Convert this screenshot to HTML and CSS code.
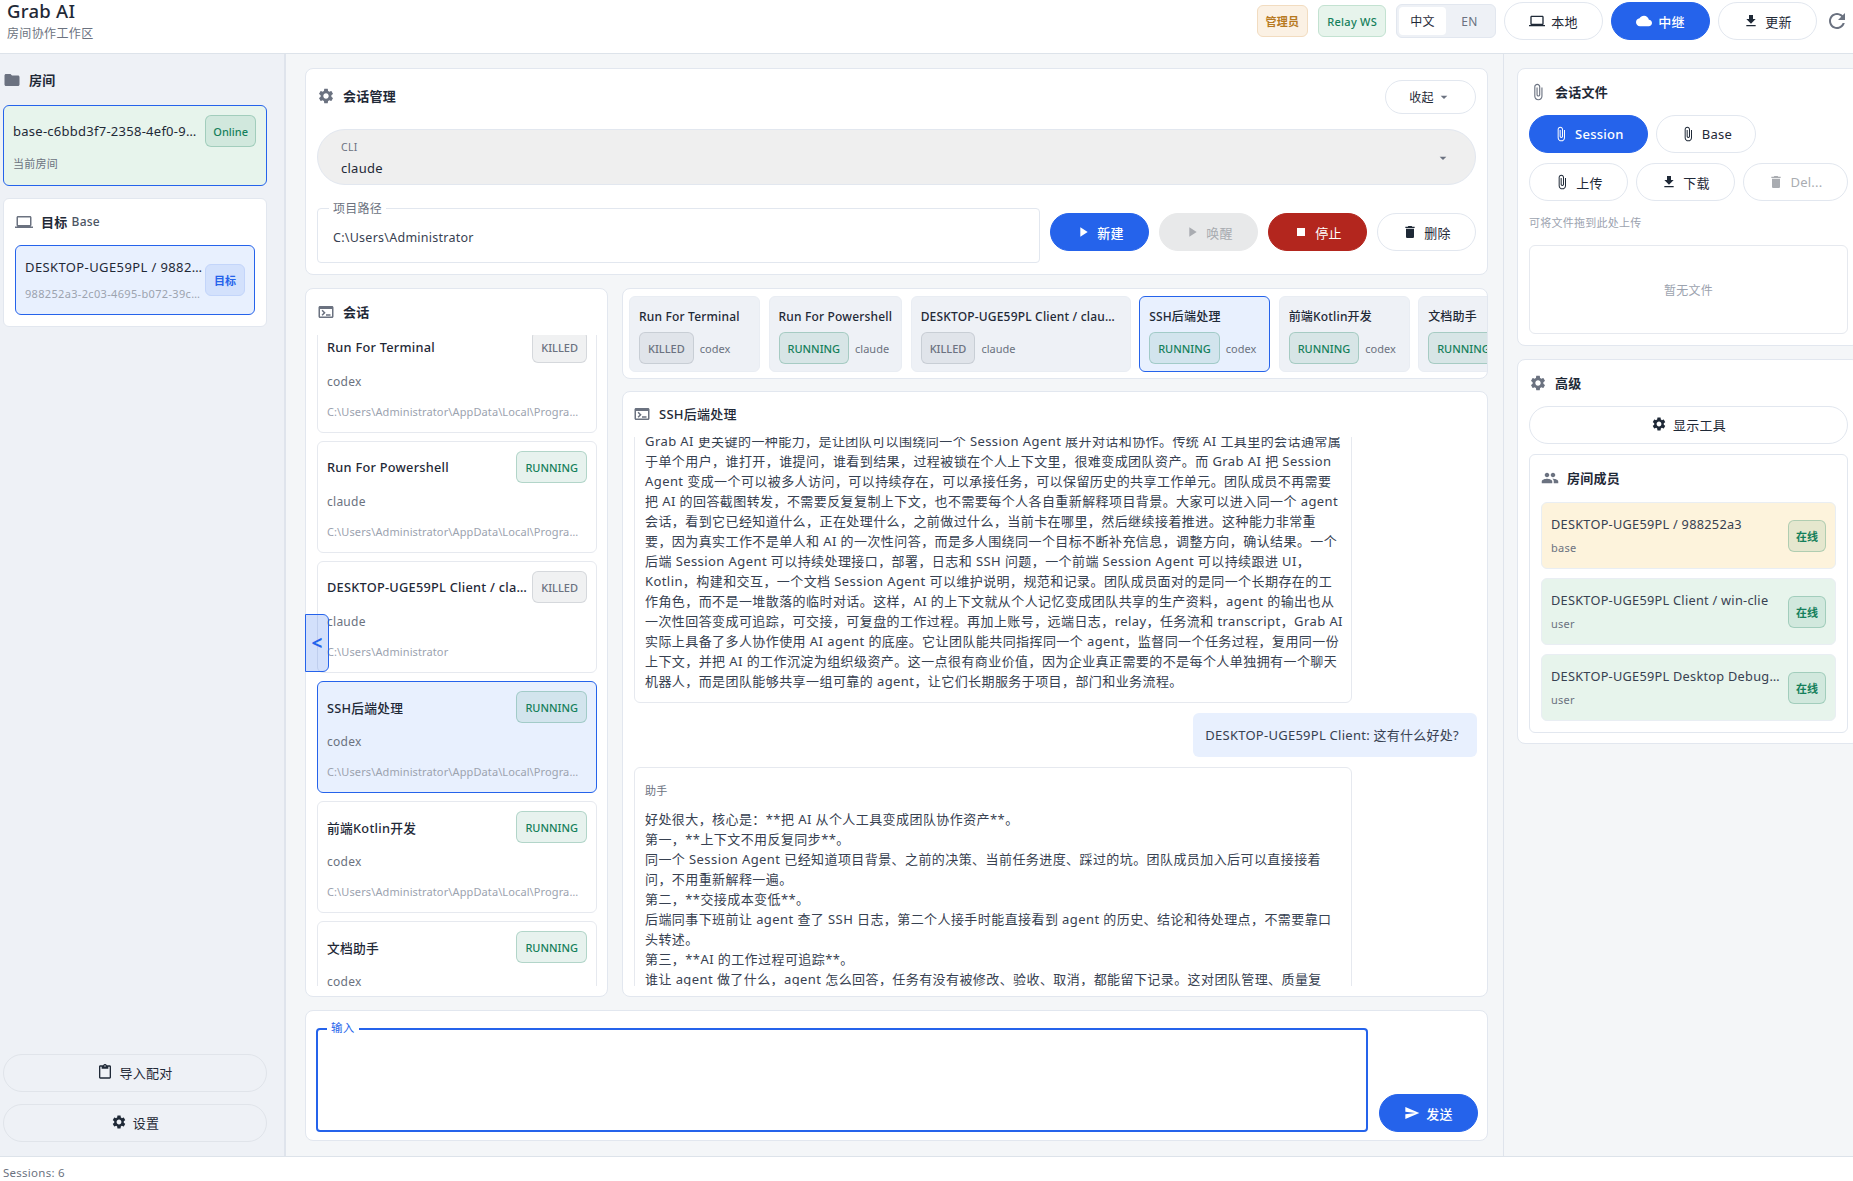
FILE: index.html
```html
<!DOCTYPE html>
<html lang="zh-CN">
<head>
  <meta charset="UTF-8">
  <title>Grab AI</title>
  <link rel="stylesheet" href="styles.css">
</head>
<body>
  <svg class="defs" width="0" height="0">
    <symbol id="i-settings" viewBox="0 0 24 24"><path d="M19.14 12.94c.04-.3.06-.61.06-.94 0-.32-.02-.64-.07-.94l2.03-1.58c.18-.14.23-.41.12-.61l-1.92-3.32c-.12-.22-.37-.29-.59-.22l-2.39.96c-.5-.38-1.03-.7-1.62-.94l-.36-2.54c-.04-.24-.24-.41-.48-.41h-3.84c-.24 0-.43.17-.47.41l-.36 2.54c-.59.24-1.13.57-1.62.94l-2.39-.96c-.22-.08-.47 0-.59.22L2.74 8.87c-.12.21-.08.47.12.61l2.03 1.58c-.05.3-.09.63-.09.94s.02.64.07.94l-2.03 1.58c-.18.14-.23.41-.12.61l1.92 3.32c.12.22.37.29.59.22l2.39-.96c.5.38 1.03.7 1.62.94l.36 2.54c.05.24.24.41.48.41h3.84c.24 0 .44-.17.47-.41l.36-2.54c.59-.24 1.13-.56 1.62-.94l2.39.96c.22.08.47 0 .59-.22l1.92-3.32c.12-.22.07-.47-.12-.61l-2.01-1.58zM12 15.6c-1.98 0-3.6-1.62-3.6-3.6s1.62-3.6 3.6-3.6 3.6 1.62 3.6 3.6-1.62 3.6-3.6 3.6z"/></symbol>
    <symbol id="i-folder" viewBox="0 0 24 24"><path d="M10 4H4c-1.1 0-1.99.9-1.99 2L2 18c0 1.1.9 2 2 2h16c1.1 0 2-.9 2-2V8c0-1.1-.9-2-2-2h-8l-2-2z"/></symbol>
    <symbol id="i-laptop" viewBox="0 0 24 24"><path d="M20 18c1.1 0 1.99-.9 1.99-2L22 6c0-1.1-.9-2-2-2H4c-1.1 0-2 .9-2 2v10c0 1.1.9 2 2 2H0v2h24v-2h-4zM4 6h16v10H4V6z"/></symbol>
    <symbol id="i-terminal" viewBox="0 0 24 24"><path d="M20 4H4c-1.11 0-2 .9-2 2v12c0 1.1.89 2 2 2h16c1.1 0 2-.9 2-2V6c0-1.1-.9-2-2-2zm0 14H4V8h16v10zm-2-1h-6v-2h6v2zM7.5 17l-1.41-1.41L8.67 13l-2.59-2.59L7.5 9l4 4-4 4z"/></symbol>
    <symbol id="i-attach" viewBox="0 0 24 24"><path d="M16.5 6v11.5c0 2.21-1.79 4-4 4s-4-1.79-4-4V5c0-1.38 1.12-2.5 2.5-2.5s2.5 1.12 2.5 2.5v10.5c0 .55-.45 1-1 1s-1-.45-1-1V6H10v9.5c0 1.38 1.12 2.5 2.5 2.5s2.5-1.12 2.5-2.5V5c0-2.21-1.79-4-4-4S7 2.79 7 5v12.5c0 3.04 2.46 5.5 5.5 5.5s5.5-2.46 5.5-5.5V6h-1.5z"/></symbol>
    <symbol id="i-download" viewBox="0 0 24 24"><path d="M19 9h-4V3H9v6H5l7 7 7-7zM5 18v2h14v-2H5z"/></symbol>
    <symbol id="i-delete" viewBox="0 0 24 24"><path d="M6 19c0 1.1.9 2 2 2h8c1.1 0 2-.9 2-2V7H6v12zM19 4h-3.5l-1-1h-5l-1 1H5v2h14V4z"/></symbol>
    <symbol id="i-stop" viewBox="0 0 24 24"><path d="M6 6h12v12H6z"/></symbol>
    <symbol id="i-play" viewBox="0 0 24 24"><path d="M8 5v14l11-7z"/></symbol>
    <symbol id="i-cloud" viewBox="0 0 24 24"><path d="M19.35 10.04C18.67 6.59 15.64 4 12 4 9.11 4 6.6 5.64 5.35 8.04 2.34 8.36 0 10.91 0 14c0 3.31 2.69 6 6 6h13c2.76 0 5-2.24 5-5 0-2.64-2.05-4.78-4.65-4.96z"/></symbol>
    <symbol id="i-send" viewBox="0 0 24 24"><path d="M2.01 21 23 12 2.01 3 2 10l15 2-15 2z"/></symbol>
    <symbol id="i-people" viewBox="0 0 24 24"><path d="M16 11c1.66 0 2.99-1.34 2.99-3S17.66 5 16 5c-1.66 0-3 1.34-3 3s1.34 3 3 3zm-8 0c1.66 0 2.99-1.34 2.99-3S9.66 5 8 5C6.34 5 5 6.34 5 8s1.34 3 3 3zm0 2c-2.33 0-7 1.17-7 3.5V19h14v-2.5c0-2.33-4.67-3.5-7-3.5zm8 0c-.29 0-.62.02-.97.05 1.16.84 1.97 1.97 1.97 3.45V19h6v-2.5c0-2.33-4.67-3.5-7-3.5z"/></symbol>
    <symbol id="i-refresh" viewBox="0 0 24 24"><path d="M17.65 6.35C16.2 4.9 14.21 4 12 4c-4.42 0-7.99 3.58-7.99 8s3.57 8 7.99 8c3.73 0 6.84-2.55 7.73-6h-2.08c-.82 2.33-3.04 4-5.65 4-3.31 0-6-2.69-6-6s2.69-6 6-6c1.66 0 3.14.69 4.22 1.78L13 11h7V4l-2.35 2.35z"/></symbol>
    <symbol id="i-paste" viewBox="0 0 24 24"><path d="M19 2h-4.18C14.4.84 13.3 0 12 0c-1.3 0-2.4.84-2.82 2H5c-1.1 0-2 .9-2 2v16c0 1.1.9 2 2 2h14c1.1 0 2-.9 2-2V4c0-1.1-.9-2-2-2zm-7 0c.55 0 1 .45 1 1s-.45 1-1 1-1-.45-1-1 .45-1 1-1zm7 18H5V4h2v3h10V4h2v16z"/></symbol>
    <symbol id="i-drop" viewBox="0 0 24 24"><path d="M7 10l5 5 5-5z"/></symbol>
  </svg>

  <header class="topbar">
    <div class="brand">
      <div class="brand-title">Grab AI</div>
      <div class="brand-sub">房间协作工作区</div>
    </div>
    <div class="topbar-actions">
      <span class="chip chip-admin">管理员</span>
      <span class="chip chip-relay">Relay WS</span>
      <div class="lang">
        <span class="lang-item active">中文</span>
        <span class="lang-item">EN</span>
      </div>
      <button class="btn"><svg class="icon"><use href="#i-laptop"/></svg>本地</button>
      <button class="btn btn-primary"><svg class="icon"><use href="#i-cloud"/></svg>中继</button>
      <button class="btn"><svg class="icon"><use href="#i-download"/></svg>更新</button>
      <svg class="icon refresh"><use href="#i-refresh"/></svg>
    </div>
  </header>

  <div class="layout">
    <aside class="sidebar-left">
      <div class="head head-flat"><svg class="icon"><use href="#i-folder"/></svg>房间</div>
      <div class="room-card">
        <div class="row">
          <span class="room-name ellipsis">base-c6bbd3f7-2358-4ef0-9a10-77aa</span>
          <span class="badge badge-ok">Online</span>
        </div>
        <div class="room-sub">当前房间</div>
      </div>
      <div class="panel target-panel">
        <div class="head"><svg class="icon"><use href="#i-laptop"/></svg>目标 <span class="head-light">Base</span></div>
        <div class="target-card">
          <div class="target-text">
            <div class="target-name ellipsis">DESKTOP-UGE59PL / 988252a3-2c03</div>
            <div class="target-id ellipsis">988252a3-2c03-4695-b072-39c3a8e10f2d</div>
          </div>
          <span class="badge badge-blue">目标</span>
        </div>
      </div>
      <div class="side-buttons">
        <button class="btn btn-flat"><svg class="icon"><use href="#i-paste"/></svg>导入配对</button>
        <button class="btn btn-flat"><svg class="icon"><use href="#i-settings"/></svg>设置</button>
      </div>
    </aside>

    <main class="center">
      <section class="panel manage">
        <div class="manage-head">
          <div class="head"><svg class="icon"><use href="#i-settings"/></svg>会话管理</div>
          <button class="btn btn-small">收起<svg class="icon caret"><use href="#i-drop"/></svg></button>
        </div>
        <div class="cli-select">
          <div>
            <div class="cli-label">CLI</div>
            <div class="cli-value">claude</div>
          </div>
          <svg class="icon caret"><use href="#i-drop"/></svg>
        </div>
        <div class="path-row">
          <div class="outlined">
            <span class="outlined-label">项目路径</span>
            C:\Users\Administrator
          </div>
          <div class="path-actions">
            <button class="btn btn-primary"><svg class="icon"><use href="#i-play"/></svg>新建</button>
            <button class="btn btn-disabled"><svg class="icon"><use href="#i-play"/></svg>唤醒</button>
            <button class="btn btn-danger"><svg class="icon"><use href="#i-stop"/></svg>停止</button>
            <button class="btn"><svg class="icon"><use href="#i-delete"/></svg>删除</button>
          </div>
        </div>
      </section>

      <div class="work">
        <section class="panel sessions">
          <div class="head sessions-head"><svg class="icon"><use href="#i-terminal"/></svg>会话</div>
          <div class="session-scroll">
            <div class="session-list">
              <div class="session">
                <div class="row"><span class="session-title ellipsis">Run For Terminal</span><span class="badge badge-off">KILLED</span></div>
                <div class="session-cli">codex</div>
                <div class="session-path ellipsis">C:\Users\Administrator\AppData\Local\Programs\grab-ai\resources</div>
              </div>
              <div class="session">
                <div class="row"><span class="session-title ellipsis">Run For Powershell</span><span class="badge badge-ok">RUNNING</span></div>
                <div class="session-cli">claude</div>
                <div class="session-path ellipsis">C:\Users\Administrator\AppData\Local\Programs\grab-ai\resources</div>
              </div>
              <div class="session">
                <div class="row"><span class="session-title ellipsis">DESKTOP-UGE59PL Client / claude-code</span><span class="badge badge-off">KILLED</span></div>
                <div class="session-cli">claude</div>
                <div class="session-path ellipsis">C:\Users\Administrator</div>
              </div>
              <div class="session selected">
                <div class="row"><span class="session-title ellipsis">SSH后端处理</span><span class="badge badge-ok">RUNNING</span></div>
                <div class="session-cli">codex</div>
                <div class="session-path ellipsis">C:\Users\Administrator\AppData\Local\Programs\grab-ai\resources</div>
              </div>
              <div class="session">
                <div class="row"><span class="session-title ellipsis">前端Kotlin开发</span><span class="badge badge-ok">RUNNING</span></div>
                <div class="session-cli">codex</div>
                <div class="session-path ellipsis">C:\Users\Administrator\AppData\Local\Programs\grab-ai\resources</div>
              </div>
              <div class="session">
                <div class="row"><span class="session-title ellipsis">文档助手</span><span class="badge badge-ok">RUNNING</span></div>
                <div class="session-cli">codex</div>
                <div class="session-path ellipsis">C:\Users\Administrator\AppData\Local\Programs\grab-ai\resources</div>
              </div>
            </div>
          </div>
          <button class="collapse-handle">&lt;</button>
        </section>

        <div class="conversation">
          <section class="panel tabs">
            <div class="tab">
              <div class="tab-title ellipsis">Run For Terminal</div>
              <div class="tab-meta"><span class="badge badge-off">KILLED</span><span class="tab-cli">codex</span></div>
            </div>
            <div class="tab">
              <div class="tab-title ellipsis">Run For Powershell</div>
              <div class="tab-meta"><span class="badge badge-ok">RUNNING</span><span class="tab-cli">claude</span></div>
            </div>
            <div class="tab">
              <div class="tab-title ellipsis">DESKTOP-UGE59PL Client / claude-code</div>
              <div class="tab-meta"><span class="badge badge-off">KILLED</span><span class="tab-cli">claude</span></div>
            </div>
            <div class="tab selected">
              <div class="tab-title ellipsis">SSH后端处理</div>
              <div class="tab-meta"><span class="badge badge-ok">RUNNING</span><span class="tab-cli">codex</span></div>
            </div>
            <div class="tab">
              <div class="tab-title ellipsis">前端Kotlin开发</div>
              <div class="tab-meta"><span class="badge badge-ok">RUNNING</span><span class="tab-cli">codex</span></div>
            </div>
            <div class="tab">
              <div class="tab-title ellipsis">文档助手</div>
              <div class="tab-meta"><span class="badge badge-ok">RUNNING</span><span class="tab-cli">codex</span></div>
            </div>
          </section>

          <section class="panel chat">
            <div class="head chat-head"><svg class="icon"><use href="#i-terminal"/></svg>SSH后端处理</div>
            <div class="chat-scroll">
              <div class="chat-list">
                <div class="msg">
                  <div class="msg-role">助手</div>
                  <div class="msg-text">Grab AI 更关键的一种能力，是让团队可以围绕同一个 Session Agent 展开对话和协作。传统 AI 工具里的会话通常属
于单个用户，谁打开，谁提问，谁看到结果，过程被锁在个人上下文里，很难变成团队资产。而 Grab AI 把 Session
Agent 变成一个可以被多人访问，可以持续存在，可以承接任务，可以保留历史的共享工作单元。团队成员不再需要
把 AI 的回答截图转发，不需要反复复制上下文，也不需要每个人各自重新解释项目背景。大家可以进入同一个 agent
会话，看到它已经知道什么，正在处理什么，之前做过什么，当前卡在哪里，然后继续接着推进。这种能力非常重
要，因为真实工作不是单人和 AI 的一次性问答，而是多人围绕同一个目标不断补充信息，调整方向，确认结果。一个
后端 Session Agent 可以持续处理接口，部署，日志和 SSH 问题，一个前端 Session Agent 可以持续跟进 UI，
Kotlin，构建和交互，一个文档 Session Agent 可以维护说明，规范和记录。团队成员面对的是同一个长期存在的工
作角色，而不是一堆散落的临时对话。这样，AI 的上下文就从个人记忆变成团队共享的生产资料，agent 的输出也从
一次性回答变成可追踪，可交接，可复盘的工作过程。再加上账号，远端日志，relay，任务流和 transcript，Grab AI
实际上具备了多人协作使用 AI agent 的底座。它让团队能共同指挥同一个 agent，监督同一个任务过程，复用同一份
上下文，并把 AI 的工作沉淀为组织级资产。这一点很有商业价值，因为企业真正需要的不是每个人单独拥有一个聊天
机器人，而是团队能够共享一组可靠的 agent，让它们长期服务于项目，部门和业务流程。</div>
                </div>
                <div class="msg-user">DESKTOP-UGE59PL Client: 这有什么好处?</div>
                <div class="msg">
                  <div class="msg-role">助手</div>
                  <div class="msg-text">好处很大，核心是：**把 AI 从个人工具变成团队协作资产**。
第一，**上下文不用反复同步**。
同一个 Session Agent 已经知道项目背景、之前的决策、当前任务进度、踩过的坑。团队成员加入后可以直接接着
问，不用重新解释一遍。
第二，**交接成本变低**。
后端同事下班前让 agent 查了 SSH 日志，第二个人接手时能直接看到 agent 的历史、结论和待处理点，不需要靠口
头转述。
第三，**AI 的工作过程可追踪**。
谁让 agent 做了什么，agent 怎么回答，任务有没有被修改、验收、取消，都能留下记录。这对团队管理、质量复
盘都有帮助。</div>
                </div>
              </div>
            </div>
          </section>
        </div>
      </div>

      <section class="panel composer">
        <div class="composer-field">
          <span class="composer-label">输入</span>
          <textarea class="composer-input"></textarea>
        </div>
        <button class="btn btn-primary"><svg class="icon"><use href="#i-send"/></svg>发送</button>
      </section>
    </main>

    <aside class="sidebar-right">
      <section class="panel files">
        <div class="head"><svg class="icon"><use href="#i-attach"/></svg>会话文件</div>
        <div class="btn-row">
          <button class="btn btn-primary btn-wide"><svg class="icon"><use href="#i-attach"/></svg>Session</button>
          <button class="btn btn-wide"><svg class="icon"><use href="#i-attach"/></svg>Base</button>
        </div>
        <div class="btn-row">
          <button class="btn"><svg class="icon"><use href="#i-attach"/></svg>上传</button>
          <button class="btn"><svg class="icon"><use href="#i-download"/></svg>下载</button>
          <button class="btn btn-muted"><svg class="icon"><use href="#i-delete"/></svg>Del...</button>
        </div>
        <div class="drop-hint">可将文件拖到此处上传</div>
        <div class="drop-zone">暂无文件</div>
      </section>

      <section class="panel advanced">
        <div class="head"><svg class="icon"><use href="#i-settings"/></svg>高级</div>
        <button class="btn btn-full"><svg class="icon"><use href="#i-settings"/></svg>显示工具</button>
        <div class="members">
          <div class="head"><svg class="icon"><use href="#i-people"/></svg>房间成员</div>
          <div class="member-list">
            <div class="member member-base">
              <div class="member-text">
                <div class="member-name ellipsis">DESKTOP-UGE59PL / 988252a3</div>
                <div class="member-role">base</div>
              </div>
              <span class="badge badge-ok badge-strong">在线</span>
            </div>
            <div class="member">
              <div class="member-text">
                <div class="member-name ellipsis">DESKTOP-UGE59PL Client / win-clie</div>
                <div class="member-role">user</div>
              </div>
              <span class="badge badge-ok badge-strong">在线</span>
            </div>
            <div class="member">
              <div class="member-text">
                <div class="member-name ellipsis">DESKTOP-UGE59PL Desktop Debug Client</div>
                <div class="member-role">user</div>
              </div>
              <span class="badge badge-ok badge-strong">在线</span>
            </div>
          </div>
        </div>
      </section>
    </aside>
  </div>

  <footer class="statusbar">Sessions: 6</footer>
</body>
</html>
```

FILE: styles.css
```css
* {
  box-sizing: border-box;
}

html, body {
  height: 100%;
}

body {
  margin: 0;
  display: flex;
  flex-direction: column;
  overflow: hidden;
  background: #fff;
  color: #1f2937;
  font-family: "Noto Sans", "Noto Sans CJK SC", sans-serif;
  font-size: 13px;
  letter-spacing: 0.02em;
}

button, textarea {
  font: inherit;
  letter-spacing: inherit;
}

.defs {
  position: absolute;
}

.icon {
  width: 16px;
  height: 16px;
  flex: none;
  fill: currentColor;
}

.ellipsis {
  overflow: hidden;
  white-space: nowrap;
  text-overflow: ellipsis;
}

/* top bar */
.topbar {
  flex: none;
  height: 54px;
  display: flex;
  justify-content: space-between;
  padding: 0 4px 11px 7px;
  border-bottom: 1px solid #dde3ea;
  overflow: hidden;
}

.brand-title {
  font-size: 18.5px;
  font-weight: 500;
  line-height: 22px;
  color: #1f2937;
}

.brand-sub {
  margin-top: 2px;
  font-size: 12px;
  line-height: 20px;
  letter-spacing: 0.03em;
  color: #6b7280;
}

.topbar-actions {
  display: flex;
  align-items: center;
  margin-top: 2px;
  gap: 8px;
  height: 38px;
}

.chip {
  display: flex;
  align-items: center;
  height: 32px;
  padding: 0 8px;
  margin-right: 2px;
  border: 1px solid;
  border-radius: 6px;
  font-size: 11px;
  font-weight: 600;
}

.chip-admin {
  background: #fbf1e4;
  border-color: #f2dcc0;
  color: #b7791f;
}

.chip-relay {
  background: #e7f4ec;
  border-color: #c3e2d1;
  color: #15805b;
  font-weight: 500;
}

.lang {
  display: flex;
  width: 100px;
  height: 34px;
  padding: 2px;
  background: #eef1f6;
  border: 1px solid #e2e7ef;
  border-radius: 6px;
  font-size: 12px;
}

.lang-item {
  flex: 1;
  display: flex;
  align-items: center;
  justify-content: center;
  border-radius: 4px;
  color: #6b7280;
}

.lang-item.active {
  background: #fff;
  color: #1f2937;
}

.refresh {
  width: 24px;
  height: 24px;
  color: #6b7280;
}

/* buttons */
.btn {
  display: inline-flex;
  align-items: center;
  justify-content: center;
  gap: 6px;
  flex: none;
  min-width: 99px;
  height: 38px;
  padding: 0 24px;
  background: #fff;
  border: 1px solid #e2e7ef;
  border-radius: 19px;
  color: #1f2937;
  font-size: 13px;
  cursor: pointer;
}

.btn-primary {
  background: #2563eb;
  border-color: #2563eb;
  color: #fff;
  font-weight: 500;
}

.btn-danger {
  background: #b3261e;
  border-color: #b3261e;
  color: #fff;
}

.btn-disabled {
  background: #e8e9ea;
  border-color: #e8e9ea;
  color: #a9acb1;
}

.btn-muted {
  flex: 1;
  min-width: 0;
  padding: 0;
  color: #a9acb1;
}

.btn-flat {
  width: 100%;
  padding-bottom: 2px;
  background: transparent;
  border-color: #e0e4ea;
}

.btn-small {
  min-width: 91px;
  height: 34px;
  padding: 0 14px;
  gap: 2px;
  font-size: 12px;
}

.btn-full {
  width: 100%;
  padding-bottom: 2px;
}

.btn-wide {
  padding: 0 23px;
}

.btn-row {
  display: flex;
  gap: 8px;
  margin-bottom: 10px;
}

.caret {
  color: #6b7280;
}

/* shared panels */
.panel {
  background: #fff;
  border: 1px solid #e2e7ef;
  border-radius: 8px;
}

.head {
  display: flex;
  align-items: center;
  gap: 8px;
  height: 26px;
  padding-bottom: 3px;
  font-size: 13px;
  font-weight: 600;
  color: #1f2937;
}

.head .icon {
  width: 18px;
  height: 18px;
  color: #6b7280;
}

.head-light {
  margin-left: -4px;
  font-size: 12px;
  font-weight: 500;
  color: #4b5563;
}

.row {
  display: flex;
  align-items: center;
  justify-content: space-between;
  gap: 4px;
}

.badge {
  flex: none;
  display: inline-flex;
  align-items: center;
  height: 32px;
  padding: 0 8px;
  border: 1px solid;
  border-radius: 6px;
  font-size: 11px;
  font-weight: 500;
  letter-spacing: 0;
}

.badge-ok {
  background: rgba(21, 128, 91, 0.1);
  border-color: rgba(21, 128, 91, 0.25);
  color: #15805b;
}

.badge-off {
  background: rgba(107, 114, 128, 0.1);
  border-color: rgba(107, 114, 128, 0.2);
  color: #6b7280;
}

.badge-blue {
  background: #d3e1fc;
  border-color: #c3d5fa;
  color: #2563eb;
  font-weight: 600;
}

.badge-strong {
  padding: 0 7px;
  font-weight: 600;
}

/* layout */
.layout {
  flex: 1;
  min-height: 0;
  display: flex;
}

.sidebar-left {
  flex: none;
  width: 286px;
  display: flex;
  flex-direction: column;
  padding: 14px 17px 14px 3px;
  background: #eef1f6;
  border-right: 2px solid #dfe4ec;
}

.head-flat {
  margin-bottom: 11px;
}

.room-card {
  height: 81px;
  padding: 9px 10px 0 9px;
  background: #e7f4ec;
  border: 1px solid #2563eb;
  border-radius: 6px;
}

.room-card .badge {
  padding: 0 7px;
}

.room-name {
  font-size: 13px;
  letter-spacing: 0.02em;
}

.room-sub {
  margin-top: 7px;
  font-size: 11px;
  line-height: 20px;
  color: #6b7280;
}

.target-panel {
  margin-top: 12px;
  height: 129px;
  padding: 11px;
  border-radius: 6px;
}

.target-card {
  display: flex;
  align-items: center;
  gap: 1px;
  height: 70px;
  margin-top: 9px;
  padding: 0 9px;
  background: #e8f0fe;
  border: 1px solid #2563eb;
  border-radius: 6px;
}

.target-text {
  flex: 1;
  min-width: 0;
}

.target-name {
  font-size: 13px;
  line-height: 20px;
  letter-spacing: 0.03em;
}

.target-id {
  margin-top: 7px;
  font-size: 11px;
  line-height: 20px;
  letter-spacing: 0.03em;
  color: #9ca3af;
}

.side-buttons {
  margin-top: auto;
  display: flex;
  flex-direction: column;
  gap: 12px;
}

.center {
  flex: 1;
  min-width: 0;
  display: flex;
  flex-direction: column;
  gap: 13px;
  padding: 14px 15px 15px 19px;
  background: #f4f6f8;
}

/* session manager */
.manage {
  flex: none;
  height: 207px;
  padding: 11px;
}

.manage-head {
  display: flex;
  align-items: center;
  justify-content: space-between;
  height: 34px;
}

.cli-select {
  display: flex;
  align-items: center;
  justify-content: space-between;
  height: 56px;
  margin-top: 15px;
  padding: 1px 24px 0 23px;
  background: #efefef;
  border: 1px solid #e2e7ef;
  border-radius: 28px;
}

.cli-label {
  font-size: 10.5px;
  line-height: 16px;
  color: #6b7280;
}

.cli-value {
  margin-top: 4px;
  font-size: 13px;
  line-height: 18px;
}

.path-row {
  display: flex;
  align-items: flex-start;
  gap: 10px;
  margin-top: 23px;
}

.outlined {
  position: relative;
  flex: 1;
  height: 55px;
  padding: 20px 15px 0;
  border: 1px solid #e2e7ef;
  border-radius: 4px;
  font-size: 12.5px;
  line-height: 18px;
  color: #374151;
}

.outlined-label {
  position: absolute;
  top: -8px;
  left: 11px;
  padding: 0 4px;
  background: #fff;
  font-size: 12px;
  line-height: 16px;
  color: #6b7280;
}

.path-actions {
  display: flex;
  gap: 10px;
  margin-top: 5px;
}

/* session list */
.work {
  flex: 1;
  min-height: 0;
  display: flex;
  gap: 14px;
}

.sessions {
  position: relative;
  flex: none;
  width: 303px;
  display: flex;
  flex-direction: column;
  padding: 11px 10px 10px 11px;
}

.sessions-head {
  flex: none;
  margin-bottom: 9px;
}

.session-scroll {
  flex: 1;
  min-height: 0;
  overflow: hidden;
}

.session-list {
  display: flex;
  flex-direction: column;
  gap: 8px;
  margin-top: -14px;
}

.session {
  flex: none;
  height: 112px;
  padding: 9px 9px 10px;
  border: 1px solid #e6e9ef;
  border-radius: 6px;
}

.session.selected {
  background: #e8f0fe;
  border-color: #2563eb;
}

.session-title {
  font-size: 12.75px;
  font-weight: 500;
}

.session-cli {
  margin-top: 9px;
  font-size: 12px;
  line-height: 20px;
  color: #6b7280;
}

.session-path {
  margin-top: 10px;
  font-size: 11px;
  line-height: 20px;
  letter-spacing: 0.01em;
  color: #9ca3af;
}

.collapse-handle {
  position: absolute;
  top: 325px;
  left: -1px;
  width: 24px;
  height: 58px;
  padding: 0;
  background: rgba(37, 99, 235, 0.2);
  border: 1px solid #2563eb;
  border-radius: 0 6px 6px 0;
  color: #2563eb;
  font-size: 19px;
  font-weight: 700;
}

/* tabs */
.conversation {
  flex: 1;
  min-width: 0;
  display: flex;
  flex-direction: column;
  gap: 12px;
}

.tabs {
  flex: none;
  height: 91px;
  display: flex;
  gap: 8.5px;
  padding: 7px 0 0 6px;
  overflow: hidden;
}

.tab {
  flex: none;
  min-width: 131px;
  max-width: 220px;
  height: 76px;
  padding: 10px 9px 7px;
  background: #eef1f6;
  border: 1px solid #e9edf3;
  border-radius: 6px;
}

.tab.selected {
  background: #e8f0fe;
  border-color: #2563eb;
}

.tab-title {
  font-size: 12px;
  font-weight: 500;
  line-height: 20px;
  letter-spacing: 0.18px;
}

.tab-meta {
  display: flex;
  align-items: center;
  gap: 6px;
  margin-top: 5px;
}

.tab-cli {
  font-size: 11px;
  letter-spacing: 0;
  color: #6b7280;
}

/* chat */
.chat {
  flex: 1;
  min-height: 0;
  display: flex;
  flex-direction: column;
  padding: 11px 10px 10px 10px;
}

.chat-head {
  flex: none;
  height: 24px;
  margin-bottom: 10px;
  font-weight: 500;
}

.chat-scroll {
  flex: 1;
  min-height: 0;
  overflow: hidden;
}

.chat-list {
  display: flex;
  flex-direction: column;
  gap: 10px;
  margin-top: -48px;
}

.msg {
  width: 718px;
  margin-left: 1px;
  padding: 15px 10px 11px;
  border: 1px solid #e6e9ef;
  border-radius: 6px;
  background: #fff;
}

.msg-role {
  margin-bottom: 10px;
  font-size: 11px;
  line-height: 16px;
  color: #6b7280;
}

.msg-text {
  font-size: 13px;
  line-height: 20px;
  letter-spacing: 0.42px;
  white-space: pre;
  color: #374151;
}

.msg-user {
  align-self: flex-end;
  padding: 12px 18px 12px 12px;
  background: #e8f0fe;
  border-radius: 6px;
  font-size: 13px;
  line-height: 20px;
  color: #374151;
}

/* composer */
.composer {
  flex: none;
  height: 131px;
  display: flex;
  align-items: flex-end;
  gap: 11px;
  padding: 0 9px 8px 10px;
}

.composer-field {
  position: relative;
  flex: 1;
  height: 104px;
}

.composer-label {
  position: absolute;
  top: -8px;
  left: 11px;
  padding: 0 4px;
  background: #fff;
  font-size: 11.5px;
  line-height: 16px;
  color: #2563eb;
}

.composer-input {
  display: block;
  width: 100%;
  height: 100%;
  border: 2px solid #2563eb;
  border-radius: 4px;
  outline: none;
  resize: none;
}

/* right sidebar */
.sidebar-right {
  flex: none;
  width: 350px;
  padding: 14px 0 0 13px;
  background: #f4f6f8;
  border-left: 1px solid #dfe4ec;
  overflow: hidden;
}

.files, .advanced {
  width: 343px;
  padding: 11px;
}

.files {
  height: 278px;
}

.files .head {
  margin-bottom: 9px;
}

.drop-hint {
  margin-top: 14px;
  font-size: 11px;
  line-height: 16px;
  color: #9ca3af;
}

.drop-zone {
  display: flex;
  align-items: center;
  justify-content: center;
  height: 89px;
  margin-top: 14px;
  border: 1px solid #e6e9ef;
  border-radius: 6px;
  font-size: 12px;
  color: #9ca3af;
}

.advanced {
  height: 385px;
  margin-top: 13px;
}

.advanced > .head {
  margin-bottom: 9px;
}

.members {
  height: 279px;
  margin-top: 10px;
  padding: 11px;
  border: 1px solid #e2e7ef;
  border-radius: 6px;
}

.member-list {
  display: flex;
  flex-direction: column;
  gap: 9px;
  margin-top: 10px;
}

.member {
  display: flex;
  align-items: center;
  gap: 5px;
  height: 67px;
  padding: 0 9px;
  background: #e7f4ec;
  border: 1px solid #e9eef3;
  border-radius: 6px;
}

.member-base {
  background: #fdf3dc;
}

.member-text {
  flex: 1;
  min-width: 0;
}

.member-name {
  font-size: 12.75px;
  line-height: 20px;
  color: #374151;
}

.member-role {
  margin-top: 4px;
  font-size: 11px;
  line-height: 20px;
  color: #6b7280;
}

.statusbar {
  flex: none;
  height: 25px;
  padding: 0 3px;
  border-top: 1px solid #dde3ea;
  font-size: 11.5px;
  line-height: 31px;
  color: #6b7280;
}
```
